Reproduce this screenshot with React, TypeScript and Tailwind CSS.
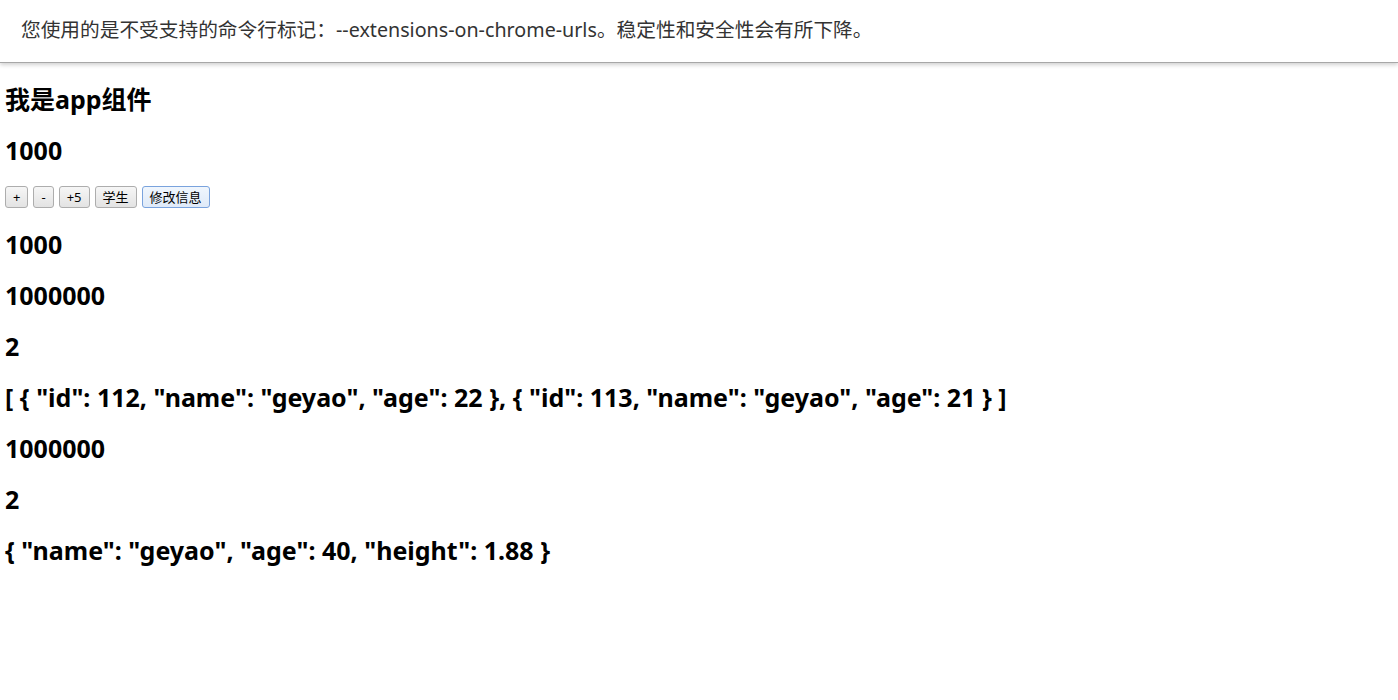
const h3 = "my-[21px] text-[25px] leading-[30px] font-bold";

const buttons = ["+", "-", "+5", "学生", "修改信息"];

export default function App() {
  return (
    <div className="min-h-[700px] bg-white text-black [font-family:'Noto_Sans','Noto_Sans_CJK_SC',sans-serif]">
      {/* browser infobar */}
      <div className="relative h-[63px] border-b border-[#a7a7a7] bg-white px-[21px] pt-[16px] text-[19.7px] leading-[28px] text-[#333] shadow-[0_2px_4px_rgba(0,0,0,0.18)]">
        您使用的是不受支持的命令行标记：--extensions-on-chrome-urls。稳定性和安全性会有所下降。
      </div>

      <div className="px-[5px]">
        <h3 className={h3}>我是app组件</h3>
        <h3 className={h3}>1000</h3>
        <div className="flex h-[22px] items-stretch gap-[5px] pl-0">
          {buttons.map((b, i) => (
            <button
              key={b}
              className={
                "rounded-[3px] border bg-gradient-to-b px-[7px] text-[13px] leading-[18px] " +
                (i === buttons.length - 1
                  ? "border-[#7aa3dd] from-[#f0f6fd] to-[#dfeaf8]"
                  : "border-[#adadad] from-[#f6f6f6] to-[#e3e3e3]")
              }
            >
              {b}
            </button>
          ))}
        </div>
        <h3 className={h3}>1000</h3>
        <h3 className={h3}>1000000</h3>
        <h3 className={h3}>2</h3>
        <h3 className={h3}>
          [ {"{"} "id": 112, "name": "geyao", "age": 22 {"}"}, {"{"} "id": 113, "name": "geyao", "age": 21 {"}"} ]
        </h3>
        <h3 className={h3}>1000000</h3>
        <h3 className={h3}>2</h3>
        <h3 className={h3}>
          {"{"} "name": "geyao", "age": 40, "height": 1.88 {"}"}
        </h3>
      </div>
    </div>
  );
}
